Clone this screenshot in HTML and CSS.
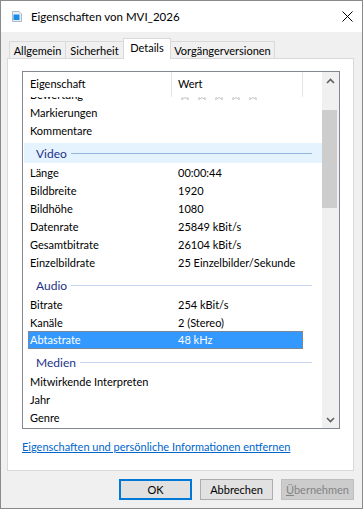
FILE: index.html
```html
<!DOCTYPE html>
<html lang="de">
<head>
    <meta charset="UTF-8">
    <title>Eigenschaften von MVI_2026</title>
    <link rel="stylesheet" href="styles.css">
</head>
<body>
    <div class="window">
        <div class="titlebar">
            <svg class="file-icon" width="10" height="11" viewBox="0 0 10 11">
                <path d="M0.5 0.5 H7 L9.5 3 V10.5 H0.5 Z" fill="#e9eff6" stroke="#a9b9cc"/>
                <rect x="1.5" y="3.5" width="6" height="5.5" fill="#1a8ce8"/>
            </svg>
            <span class="title">Eigenschaften von MVI_2026</span>
            <svg class="close" width="11" height="11" viewBox="0 0 11 11">
                <path d="M0.5 0.5 L10.5 10.5 M10.5 0.5 L0.5 10.5" stroke="#000" stroke-width="1"/>
            </svg>
        </div>

        <div class="content">
            <div class="tabs">
                <div class="tab tab-allgemein">Allgemein</div>
                <div class="tab tab-sicherheit">Sicherheit</div>
                <div class="tab tab-details active">Details</div>
                <div class="tab tab-versionen">Vorgängerversionen</div>
            </div>

            <div class="panel">
                <div class="listbox">
                    <div class="list">
                        <div class="list-head">
                            <div class="head-name">Eigenschaft</div>
                            <div class="head-value">Wert</div>
                            <div class="head-rest"></div>
                        </div>
                        <div class="list-body">
                            <div class="rows">
                                <div class="row"><span>Bewertung</span><span class="stars">
                                    <svg width="85" height="12" viewBox="0 0 85 12">
                                        <g fill="none" stroke="#c4c4c4">
                                            <polygon points="6,0.5 7.5,3.9 11.4,4.2 8.4,6.8 9.4,10.6 6,8.6 2.6,10.6 3.6,6.8 0.6,4.2 4.5,3.9"/>
                                            <polygon transform="translate(17 0)" points="6,0.5 7.5,3.9 11.4,4.2 8.4,6.8 9.4,10.6 6,8.6 2.6,10.6 3.6,6.8 0.6,4.2 4.5,3.9"/>
                                            <polygon transform="translate(34 0)" points="6,0.5 7.5,3.9 11.4,4.2 8.4,6.8 9.4,10.6 6,8.6 2.6,10.6 3.6,6.8 0.6,4.2 4.5,3.9"/>
                                            <polygon transform="translate(51 0)" points="6,0.5 7.5,3.9 11.4,4.2 8.4,6.8 9.4,10.6 6,8.6 2.6,10.6 3.6,6.8 0.6,4.2 4.5,3.9"/>
                                            <polygon transform="translate(68 0)" points="6,0.5 7.5,3.9 11.4,4.2 8.4,6.8 9.4,10.6 6,8.6 2.6,10.6 3.6,6.8 0.6,4.2 4.5,3.9"/>
                                        </g>
                                    </svg></span></div>
                                <div class="row"><span>Markierungen</span><span></span></div>
                                <div class="row"><span>Kommentare</span><span></span></div>

                                <div class="group hot"><span>Video</span><i></i></div>
                                <div class="row"><span>Länge</span><span>00:00:44</span></div>
                                <div class="row"><span>Bildbreite</span><span>1920</span></div>
                                <div class="row"><span>Bildhöhe</span><span>1080</span></div>
                                <div class="row"><span>Datenrate</span><span>25849 kBit/s</span></div>
                                <div class="row"><span>Gesamtbitrate</span><span>26104 kBit/s</span></div>
                                <div class="row"><span>Einzelbildrate</span><span>25 Einzelbilder/Sekunde</span></div>

                                <div class="group"><span>Audio</span><i></i></div>
                                <div class="row"><span>Bitrate</span><span>254 kBit/s</span></div>
                                <div class="row"><span>Kanäle</span><span>2 (Stereo)</span></div>
                                <div class="row selected"><span>Abtastrate</span><span>48 kHz</span></div>

                                <div class="group"><span>Medien</span><i></i></div>
                                <div class="row"><span>Mitwirkende Interpreten</span><span></span></div>
                                <div class="row"><span>Jahr</span><span></span></div>
                                <div class="row"><span>Genre</span><span></span></div>
                            </div>
                        </div>
                    </div>
                    <div class="scrollbar">
                        <div class="arrow">
                            <svg width="9" height="6" viewBox="0 0 9 6"><path d="M1 5 L4.5 1.5 L8 5" fill="none" stroke="#606060" stroke-width="1.6"/></svg>
                        </div>
                        <div class="track"><div class="thumb"></div></div>
                        <div class="arrow">
                            <svg width="9" height="6" viewBox="0 0 9 6"><path d="M1 1 L4.5 4.5 L8 1" fill="none" stroke="#606060" stroke-width="1.6"/></svg>
                        </div>
                    </div>
                </div>

                <a href="#" class="remove-link">Eigenschaften und persönliche Informationen entfernen</a>
            </div>

            <div class="buttons">
                <button class="btn default">OK</button>
                <button class="btn">Abbrechen</button>
                <button class="btn" disabled><u>Ü</u>bernehmen</button>
            </div>
        </div>
    </div>
</body>
</html>
```

FILE: styles.css
```css
body {
    margin: 0;
    font-family: Lato, "Liberation Sans", sans-serif;
    font-size: 11px;
    color: #000;
    background-color: #ffffff;
}

.window {
    box-sizing: border-box;
    width: 363px;
    height: 509px;
    border: 1px solid #8a8a8a;
    display: flex;
    flex-direction: column;
    background-color: #f0f0f0;
}

/* Titelleiste */
.titlebar {
    height: 31px;
    background-color: #ffffff;
    display: flex;
    align-items: center;
    padding: 0 9px 0 11px;
}

.title {
    margin-left: 9px;
    flex: 1;
    font-size: 11.5px;
}

.content {
    flex: 1;
    display: flex;
    flex-direction: column;
    padding: 6px 8px 0 6px;
}

/* Reiter */
.tabs {
    display: flex;
    align-items: flex-end;
    height: 20px;
    padding-left: 2px;
}

.tab {
    box-sizing: border-box;
    height: 17px;
    border: 1px solid #d9d9d9;
    border-bottom: none;
    margin-right: -1px;
    background-color: #f0f0f0;
    text-align: center;
    line-height: 17px;
}

.tab-allgemein { width: 57px; }
.tab-sicherheit { width: 59px; }
.tab-details { width: 48px; }
.tab-versionen { width: 105px; }

.tab.active {
    position: relative;
    z-index: 1;
    height: 21px;
    margin-bottom: -1px;
    background-color: #ffffff;
    line-height: 17px;
}

.panel {
    box-sizing: border-box;
    height: 413px;
    border: 1px solid #d9d9d9;
    background-color: #ffffff;
    padding: 12px 13px 0 14px;
}

/* Liste */
.listbox {
    box-sizing: border-box;
    height: 358px;
    border: 1px solid #828790;
    display: flex;
}

.list {
    width: 299px;
    display: flex;
    flex-direction: column;
}

.list-head {
    height: 25px;
    display: flex;
    line-height: 24px;
}

.head-name {
    width: 141px;
    padding-left: 7px;
    border-right: 1px solid #e5e5e5;
}

.head-value {
    width: 124px;
    padding-left: 6px;
    border-right: 1px solid #e5e5e5;
}

.list-body {
    flex: 1;
    overflow: hidden;
}

.rows {
    margin-top: -11px;
}

.row {
    box-sizing: border-box;
    width: 275px;
    height: 18px;
    margin-left: 5px;
    padding-left: 2px;
    display: grid;
    grid-template-columns: 148px 1fr;
    white-space: nowrap;
    border: 1px solid transparent;
    border-left: none;
    border-right: none;
}

.row span {
    line-height: 16px;
}

.row .stars {
    display: flex;
    align-items: center;
    margin-left: 1px;
}

.row.selected {
    background-color: #3399ff;
    color: #ffffff;
    border: 1px dotted #b9773b;
    padding-left: 1px;
    margin-top: -1px;
    margin-bottom: 1px;
}

.group {
    height: 20px;
    margin: 3px 0 1px 1px;
    padding: 0 10px 0 12px;
    display: flex;
    align-items: center;
    gap: 4px;
    color: #1e3287;
    font-size: 12px;
}

.group i {
    flex: 1;
    height: 1px;
    margin-top: 1px;
    background-color: #c7d3ec;
}

.group.hot {
    background-color: #e5f3ff;
}

.group.hot i {
    background-color: #93b4dd;
}

/* Bildlaufleiste */
.scrollbar {
    width: 17px;
    background-color: #f0f0f0;
    display: flex;
    flex-direction: column;
}

.arrow {
    height: 17px;
    display: flex;
    align-items: center;
    justify-content: center;
}

.track {
    flex: 1;
    padding-top: 21px;
}

.thumb {
    width: 15px;
    height: 98px;
    background-color: #cdcdcd;
}

.remove-link {
    display: block;
    margin-top: 10px;
    line-height: 16px;
    color: #0066cc;
    text-decoration: underline;
}

/* Schaltflächen */
.buttons {
    display: flex;
    justify-content: flex-end;
    gap: 8px;
    margin-top: 8px;
}

.btn {
    box-sizing: border-box;
    width: 73px;
    height: 21px;
    padding: 0;
    font-family: inherit;
    font-size: 11px;
    color: #000;
    background-color: #e1e1e1;
    border: 1px solid #adadad;
}

.btn.default {
    border: 2px solid #0078d7;
}

.btn:disabled {
    color: #838383;
    background-color: #cccccc;
    border-color: #bfbfbf;
}
```
